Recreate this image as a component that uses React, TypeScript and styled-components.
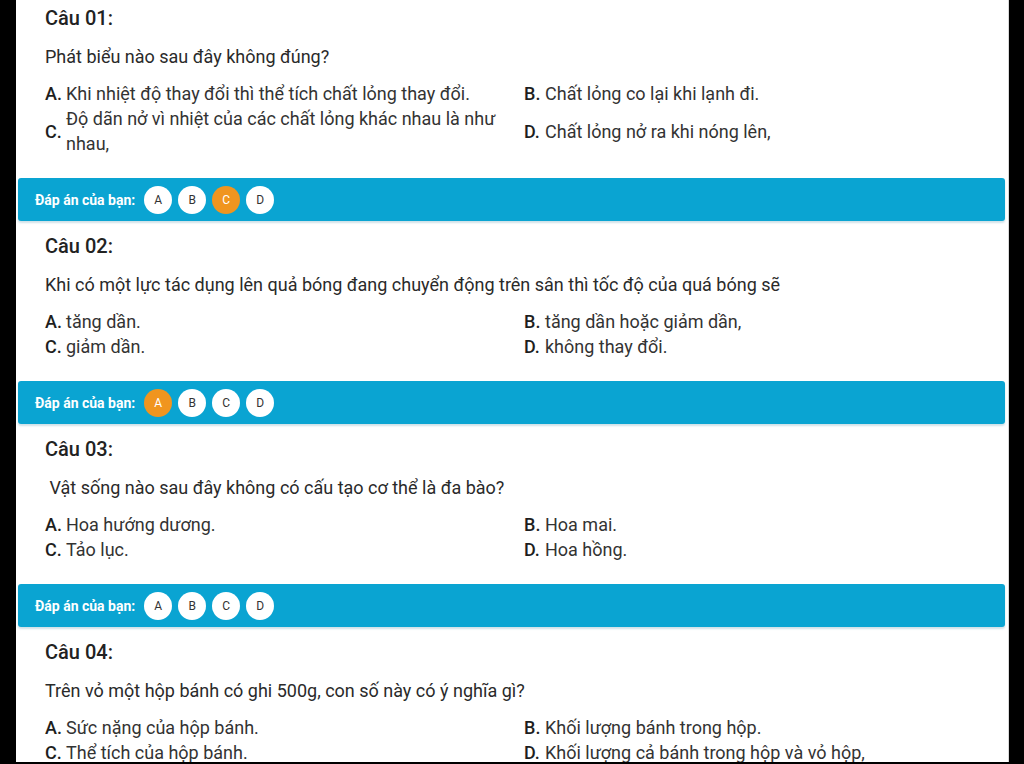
import React from 'react';
import styled, { createGlobalStyle } from 'styled-components';

const GlobalStyle = createGlobalStyle`
  html, body {
    margin: 0;
    padding: 0;
    background: #000;
    overflow: hidden;
  }
  body {
    font-family: Roboto, "Noto Sans", "Liberation Sans", sans-serif;
  }
`;

const Frame = styled.div`
  margin: 0 15px 0 16px;
  height: 762px;
  overflow: hidden;
  background: #fff;
  border-right: 1px solid #d8d8d8;
`;

const Block = styled.section<{ $first?: boolean }>`
  padding: ${(p) => (p.$first ? '6px' : '13px')} 0 22px 29px;
`;

const Title = styled.h3`
  margin: 0;
  font-size: 20px;
  line-height: 24px;
  font-weight: 500;
  color: #222;
`;

const Question = styled.p`
  margin: 14px 0 12px;
  font-size: 18px;
  line-height: 25px;
  color: #2a2a2a;
  white-space: pre-wrap;
`;

const Options = styled.div`
  display: grid;
  grid-template-columns: 479px 1fr;
  align-items: center;
`;

const Option = styled.div`
  display: flex;
  align-items: center;
  font-size: 18px;
  line-height: 25px;
  color: #333;
`;

const Letter = styled.span`
  flex: 0 0 21px;
  font-weight: 500;
  color: #1e1e1e;
`;

const OptionText = styled.span`
  flex: 1;
`;

const AnswerBar = styled.div`
  display: flex;
  align-items: center;
  gap: 6px;
  height: 43px;
  margin: 0 3px 0 2px;
  padding-left: 17px;
  background: #0aa4d2;
  border-radius: 3px;
  box-shadow: 0 2px 2px rgba(120, 170, 190, 0.35);
`;

const BarLabel = styled.span`
  font-size: 14px;
  font-weight: 700;
  color: #fff;
  margin-right: 3px;
`;

const Choice = styled.span<{ $picked?: boolean }>`
  width: 28px;
  height: 28px;
  border-radius: 50%;
  display: flex;
  align-items: center;
  justify-content: center;
  font-size: 12px;
  background: ${(p) => (p.$picked ? '#f0951f' : '#fff')};
  color: ${(p) => (p.$picked ? '#fff' : '#333')};
`;

type Q = {
  no: string;
  text: string;
  options: string[];
  picked: number | null;
};

const questions: Q[] = [
  {
    no: '01',
    text: 'Phát biểu nào sau đây không đúng?',
    options: [
      'Khi nhiệt độ thay đổi thì thể tích chất lỏng thay đổi.',
      'Chất lỏng co lại khi lạnh đi.',
      'Độ dãn nở vì nhiệt của các chất lỏng khác nhau là như nhau,',
      'Chất lỏng nở ra khi nóng lên,',
    ],
    picked: 2,
  },
  {
    no: '02',
    text: 'Khi có một lực tác dụng lên quả bóng đang chuyển động trên sân thì tốc độ của quá bóng sẽ',
    options: ['tăng dần.', 'tăng dần hoặc giảm dần,', 'giảm dần.', 'không thay đổi.'],
    picked: 0,
  },
  {
    no: '03',
    text: ' Vật sống nào sau đây không có cấu tạo cơ thể là đa bào?',
    options: ['Hoa hướng dương.', 'Hoa mai.', 'Tảo lục.', 'Hoa hồng.'],
    picked: null,
  },
  {
    no: '04',
    text: 'Trên vỏ một hộp bánh có ghi 500g, con số này có ý nghĩa gì?',
    options: [
      'Sức nặng của hộp bánh.',
      'Khối lượng bánh trong hộp.',
      'Thể tích của hộp bánh.',
      'Khối lượng cả bánh trong hộp và vỏ hộp,',
    ],
    picked: null,
  },
];

const letters = ['A', 'B', 'C', 'D'];

export default function App() {
  return (
    <>
      <GlobalStyle />
      <Frame>
        {questions.map((q, i) => (
          <React.Fragment key={q.no}>
            <Block $first={i === 0}>
              <Title>Câu {q.no}:</Title>
              <Question>{q.text}</Question>
              <Options>
                {q.options.map((o, j) => (
                  <Option key={j}>
                    <Letter>{letters[j]}.</Letter>
                    <OptionText>{o}</OptionText>
                  </Option>
                ))}
              </Options>
            </Block>
            {i < 3 && (
              <AnswerBar>
                <BarLabel>Đáp án của bạn:</BarLabel>
                {letters.map((l, j) => (
                  <Choice key={l} $picked={q.picked === j}>
                    {l}
                  </Choice>
                ))}
              </AnswerBar>
            )}
          </React.Fragment>
        ))}
      </Frame>
    </>
  );
}
